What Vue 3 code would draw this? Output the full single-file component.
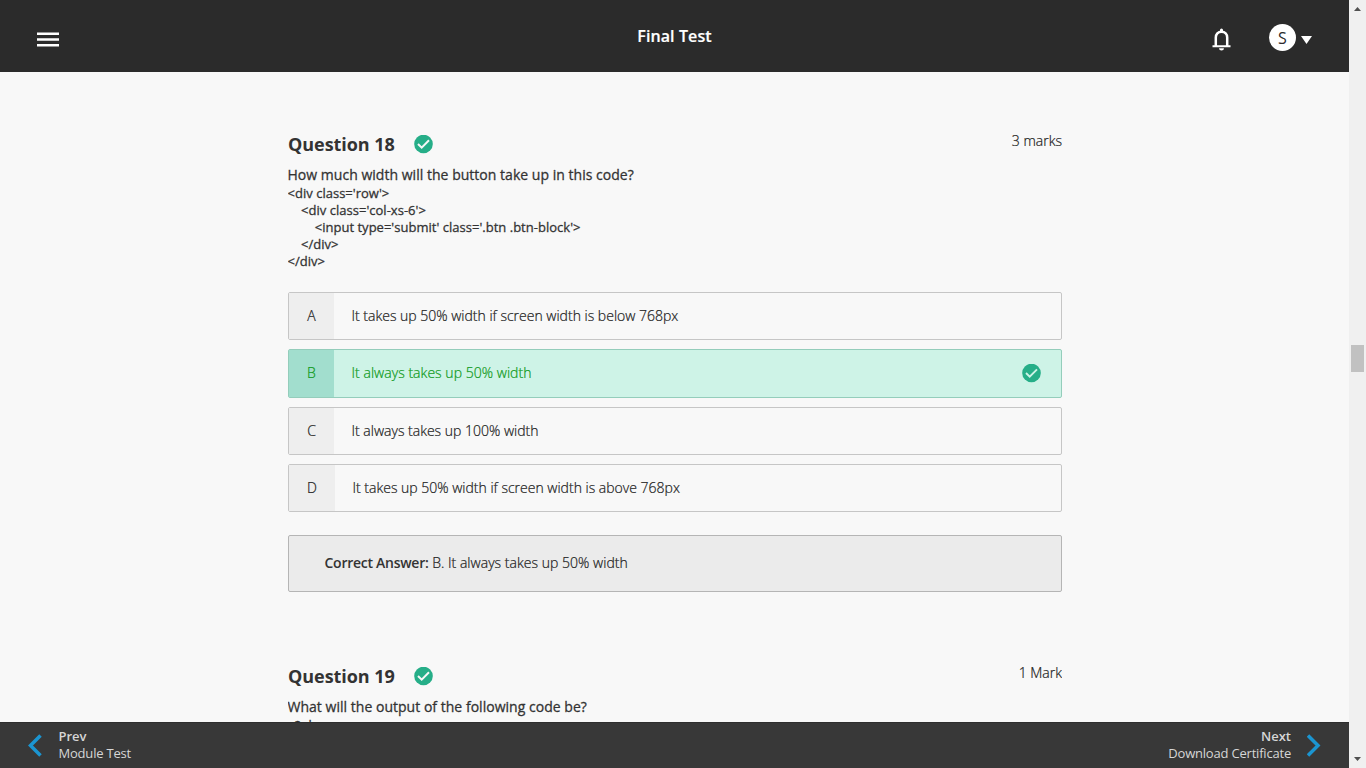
<script setup>
const code = `<div class='row'>
    <div class='col-xs-6'>
        <input type='submit' class='.btn .btn-block'>
    </div>
</div>`
const options = [
  { key: 'A', text: 'It takes up 50% width if screen width is below 768px' },
  { key: 'B', text: 'It always takes up 50% width', correct: true },
  { key: 'C', text: 'It always takes up 100% width' },
  { key: 'D', text: 'It takes up 50% width if screen width is above 768px', wide: true },
]
</script>

<template>
  <div class="screen">
    <div class="page">
      <header class="top">
        <svg class="menu" width="22" height="16" viewBox="0 0 22 16"><path d="M0 .5h22v2.500H0zM0 6.300h22v2.500H0zM0 12h22v2.500H0z" fill="#fff" /></svg>
        <h1>Final Test</h1>
        <div class="tools">
          <svg class="bell" width="20" height="23" viewBox="0 0 20 23">
            <path d="M3.800 18.300V9.600C3.800 6.200 6 3.800 9.500 3.800s5.700 2.400 5.700 5.800v8.700" fill="none" stroke="#fff" stroke-width="2.500" />
            <path d="M.5 17.200h18v2.100H.5zM8 2a1.500 1.500 0 0 1 3 0V3.800H8zM7 20.200h5a2.500 2.200 0 0 1-5 0z" fill="#fff" />
          </svg>
          <span class="avatar">S</span>
          <span class="caret"></span>
        </div>
      </header>

      <main class="body">
        <section class="question">
          <div class="head">
            <h2>Question 18</h2>
            <svg class="tick" width="19" height="19" viewBox="0 0 19 19"><circle cx="9.500" cy="9" r="9.300" fill="#26ae88" /><path d="M4 9l3.700 3.700 7.300-7.400" fill="none" stroke="#f7f7f7" stroke-width="2" /></svg>
            <span class="marks">3 marks</span>
          </div>
          <p class="prompt">How much width will the button take up in this code?</p>
          <pre class="code">{{ code }}</pre>
          <ul class="options">
            <li v-for="o in options" :key="o.key" class="option" :class="{ correct: o.correct, wide: o.wide }">
              <span class="key">{{ o.key }}</span>
              <span class="label">{{ o.text }}</span>
              <svg v-if="o.correct" class="tick" width="19" height="19" viewBox="0 0 19 19"><circle cx="9.500" cy="9" r="9.300" fill="#26ae88" /><path d="M4 9l3.700 3.700 7.300-7.400" fill="none" stroke="#cef3e7" stroke-width="1.900" /></svg>
            </li>
          </ul>
          <div class="answer"><b>Correct Answer:</b>&nbsp;<span>B. It always takes up 50% width</span></div>
        </section>

        <section class="question">
          <div class="head">
            <h2>Question 19</h2>
            <svg class="tick" width="19" height="19" viewBox="0 0 19 19"><circle cx="9.500" cy="9" r="9.300" fill="#26ae88" /><path d="M4 9l3.700 3.700 7.300-7.400" fill="none" stroke="#f7f7f7" stroke-width="2" /></svg>
            <span class="marks">1 Mark</span>
          </div>
          <p class="prompt">What will the output of the following code be?</p>
          <pre class="code">&lt;?php</pre>
        </section>
      </main>

      <footer class="bottom">
        <svg width="14" height="23" viewBox="0 0 14 23"><path d="M12.500 1.500L2.500 11.500l10 10" fill="none" stroke="#1b95d1" stroke-width="3.500" /></svg>
        <div class="nav"><b>Prev</b><span>Module Test</span></div>
        <div class="nav next"><b>Next</b><span>Download Certificate</span></div>
        <svg width="14" height="23" viewBox="0 0 14 23"><path d="M1 1.500l10 10-10 10" fill="none" stroke="#1b95d1" stroke-width="3.500" /></svg>
      </footer>
    </div>
    <aside class="scroll">
      <svg width="7" height="4" viewBox="0 0 7 4"><path d="M0 4L3.500 0 7 4z" fill="#505050" /></svg>
      <i></i>
      <svg width="7" height="4" viewBox="0 0 7 4"><path d="M0 0h7L3.500 4z" fill="#505050" /></svg>
    </aside>
  </div>
</template>

<style>
body { margin: 0; overflow: hidden; }
</style>

<style scoped>
* { box-sizing: border-box; }
.screen { display: flex; width: 1366px; height: 768px; background: #f8f8f8; color: #333; font: 300 14px/20px "Open Sans", sans-serif; }
.page { display: flex; flex-direction: column; width: 1349px; height: 768px; }
svg { display: block; flex: none; }
h1, h2, p, pre, ul { margin: 0; padding: 0; }
.top { display: grid; grid-template-columns: 1fr auto 1fr; flex: none; height: 72px; background: #2b2b2b; color: #fff; }
.menu { margin: 32px 0 0 37px; }
h1 { margin-top: 24px; font-size: 16px; font-weight: 600; line-height: 24px; letter-spacing: .1px; -webkit-text-stroke: .2px; }
.tools { display: flex; justify-content: flex-end; padding-right: 37px; }
.bell { margin: 28px 37px 0 0; }
.avatar { width: 27px; height: 27px; margin-top: 24px; border-radius: 50%; background: #fff; color: #2b2b2b; font-size: 16px; font-weight: 400; line-height: 28px; text-align: center; }
.caret { width: 11px; height: 8px; margin: 36px 0 0 5px; background: #fff; clip-path: polygon(0 0, 100% 0, 50% 100%); }
.body { flex: 1; min-height: 0; width: 774px; margin-left: 288px; overflow: hidden; }
.question { height: 532px; padding-top: 60px; }
.head { display: flex; align-items: flex-start; height: 32px; }
h2 { width: 125.500px; font-size: 18px; font-weight: 700; line-height: 25px; letter-spacing: -.05px; white-space: nowrap; }
.head .tick { margin-top: 3px; }
.marks { margin-left: auto; line-height: 18px; color: #222; -webkit-text-stroke: .22px; }
.prompt { height: 21px; margin-left: -.5px; font-size: 14px; font-weight: 400; line-height: 22px; letter-spacing: .025px; -webkit-text-stroke: .28px; }
.code { margin-left: -.5px; font: 400 13px/17px "Open Sans", sans-serif; letter-spacing: .02px; white-space: pre; -webkit-text-stroke: .28px; }
.options { display: flex; flex-direction: column; gap: 9px; margin-top: 22px; list-style: none; }
.option { display: flex; height: 48px; border: 1px solid #c6c6c6; border-radius: 2px; color: #222; -webkit-text-stroke: .22px; }
.key { width: 45px; background: #eee; line-height: 46px; text-align: center; }
.label { margin-left: 17.500px; line-height: 46px; }
.wide .key { width: 46px; }
.correct { height: 49px; border-color: #94cdbb; background: #cef3e7; color: #0f9a1b; }
.correct .label { letter-spacing: .035px; }
.correct .key { background: #a2dece; }
.correct .tick { margin: 14px 20px 0 auto; }
.answer { height: 57px; margin-top: 23px; padding-left: 35.500px; border: 1px solid #b5b5b5; border-radius: 2px; background: #ebebeb; line-height: 54px; }
.answer b { font-weight: 600; letter-spacing: -.27px; }
.answer span { color: #222; letter-spacing: .03px; -webkit-text-stroke: .22px; }
.bottom { display: flex; flex: none; height: 46px; padding: 11px 28px 0; border-top: 1px solid #2e2e2e; background: #383838; color: #d6d6d6; }
.nav { display: flex; flex-direction: column; margin: -6px 0 0 16.500px; font-size: 13px; font-weight: 400; line-height: 17px; letter-spacing: -.2px; }
.nav b { font-weight: 600; letter-spacing: 0; }
.next { margin: -6px 16px 0 auto; text-align: right; }
.scroll { display: flex; flex-direction: column; align-items: center; justify-content: space-between; width: 17px; height: 768px; padding: 7px 0 7px; background: #f0f0f0; }
.scroll i { width: 13px; height: 27px; margin-top: -52px; background: #c1c1c1; }
</style>
